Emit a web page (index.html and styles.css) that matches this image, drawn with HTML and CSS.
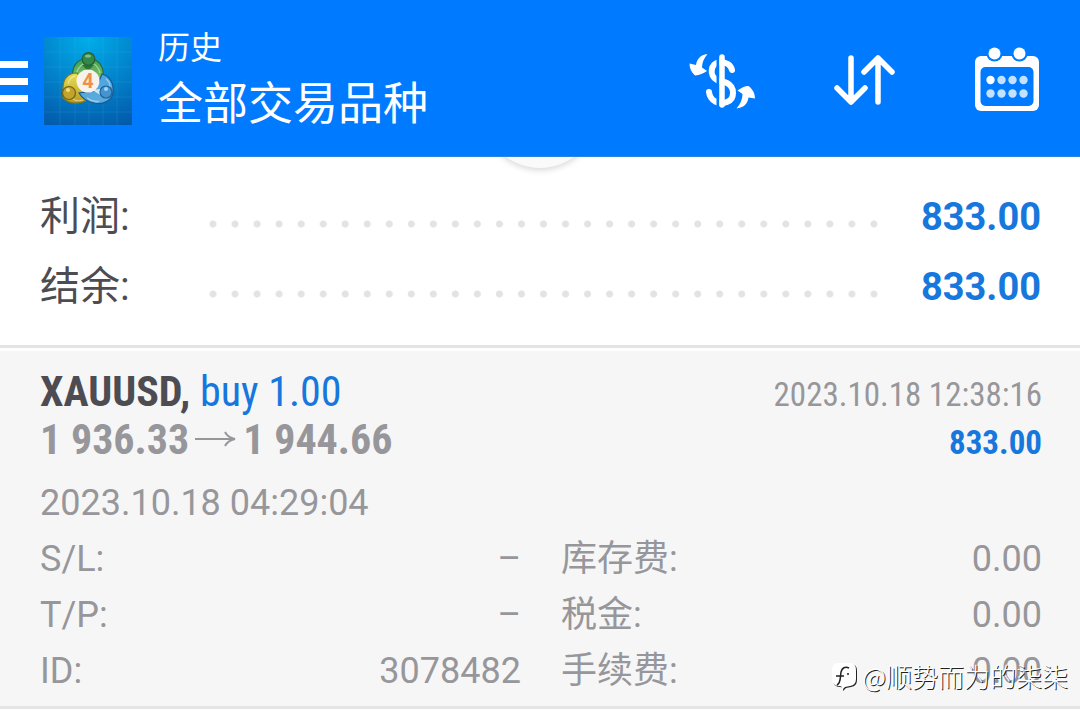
FILE: index.html
```html
<!DOCTYPE html>
<html lang="zh-CN">
<head>
    <meta charset="UTF-8">
    <meta name="viewport" content="width=device-width, initial-scale=1.0">
    <title>历史</title>
    <link rel="stylesheet" href="styles.css">
</head>
<body>
    <header class="topbar">
        <button class="menu-btn" type="button" aria-label="菜单"><span></span><span></span><span></span></button>
        <svg class="logo" viewBox="0 0 88 88" aria-hidden="true">
            <defs>
                <radialGradient id="bg" cx="0.5" cy="0" r="1.1">
                    <stop offset="0" stop-color="#00aeea"/>
                    <stop offset="0.5" stop-color="#0284cc"/>
                    <stop offset="1" stop-color="#0259aa"/>
                </radialGradient>
                <linearGradient id="green" x1="0" y1="0" x2="0" y2="1"><stop offset="0" stop-color="#3c9a50"/><stop offset="1" stop-color="#8fcf68"/></linearGradient>
                <linearGradient id="yellow" x1="0" y1="0" x2="0" y2="1"><stop offset="0" stop-color="#e8e058"/><stop offset="1" stop-color="#b89c20"/></linearGradient>
                <linearGradient id="blue" x1="0" y1="0" x2="0" y2="1"><stop offset="0" stop-color="#4ca4e0"/><stop offset="1" stop-color="#5cacdc"/></linearGradient>
            </defs>
            <rect width="88" height="88" fill="url(#bg)"/>
            <path d="M16 0v88M31 0v88M45 0v88M59 0v88M73 0v88M0 15h88M0 30h88M0 45h88M0 60h88M0 75h88" stroke="#5cc4ee" stroke-opacity="0.14"/>
            <g stroke-width="1.2">
                <path d="M29 43C27 29 33 22 44 21c11 1 17 9 15 22l-8 4-14-1z" fill="url(#green)" stroke="#246a3c"/>
                <path d="M33 36c-9 0-14 6-14 15v10c6 6 15 6 23 3l2-12z" fill="url(#yellow)" stroke="#80781c"/>
                <path d="M58 37c8 2 12 10 11 18 0 9-11 13-19 11-7-1-12-5-15-10l16-2z" fill="url(#blue)" stroke="#165a94"/>
                <path d="M33 35c1-4 3-6 6-8M56 36c-1-4-3-7-6-9M24 47c1-4 3-7 7-8M29 62c3 2 7 2 10 1M43 61c4 3 8 4 12 3M62 42c3 2 4 5 4 8" fill="none" stroke="#fff" stroke-opacity="0.45"/>
                <path d="M38 28h12l-6 6z" fill="#2c7438" stroke="none"/>
                <path d="M48 53l8-1 2 7z" fill="#c8e6f4" stroke="none"/>
                <circle cx="44.500" cy="22" r="6.300" fill="#348848" stroke="#246038"/>
                <circle cx="25" cy="56" r="6.500" fill="#c0a42c" stroke="#746018"/>
                <circle cx="62" cy="55" r="6" fill="#4494d0" stroke="#1c609c"/>
            </g>
            <ellipse cx="44" cy="19" rx="3" ry="1.600" fill="#80c088"/>
            <circle cx="24" cy="53" r="2" fill="#f0e080"/>
            <circle cx="62" cy="52" r="2" fill="#a0d4f8"/>
            <circle cx="44" cy="44" r="11.500" fill="#f6f3ee"/>
            <text class="logo-num" x="44" y="51" text-anchor="middle">4</text>
        </svg>
        <div class="titles">
            <p class="subtitle">历史</p>
            <h1 class="title">全部交易品种</h1>
        </div>
        <nav class="actions">
            <button class="icon-btn" type="button" aria-label="货币">
                <svg viewBox="0 0 70 70">
                    <path d="M46 24c-1-5-6-8-12-8-10 1-11 14-3 18 3 2 6 1 10 3 8 4 8 16 0 19-8 3-17-1-18-10" fill="none" stroke="#fff" stroke-width="6" stroke-linecap="round"/>
                    <path d="M32 8v54" stroke="#007aff" stroke-width="3"/>
                    <path d="M36 11v48" stroke="#fff" stroke-width="5.500" stroke-linecap="round"/>
                    <path d="M21.500 8C14 9 11 13 10 19l-6.500-1.500c0 5 2 9 5.500 12 5-.500 8-2 12-4.500l-5-3.500c0-5 2-9 5.500-13.500z" fill="#fff"/>
                    <path d="M50.500 62.500c7-1 11-4 12-11l6.500 1c0-5-2-9-6.500-12.500-4 0-7 2-11 4.500l5 3.500c0 5-2 10-6 14.500z" fill="#fff"/>
                </svg>
            </button>
            <button class="icon-btn" type="button" aria-label="排序">
                <svg viewBox="0 0 70 70">
                    <path d="M22 12v44M8 42l14 14 14-14M49 56V12M35 26l14-14 14 14" fill="none" stroke="#fff" stroke-width="5.500" stroke-linecap="round" stroke-linejoin="round"/>
                </svg>
            </button>
            <button class="icon-btn" type="button" aria-label="日历">
                <svg viewBox="0 0 70 70">
                    <rect x="3" y="10" width="64" height="55" rx="6" fill="#fff"/>
                    <circle cx="22.500" cy="7.500" r="8" fill="#007aff"/>
                    <circle cx="47.500" cy="7.500" r="8" fill="#007aff"/>
                    <circle cx="22.500" cy="7.500" r="6" fill="#fff"/>
                    <circle cx="47.500" cy="7.500" r="6" fill="#fff"/>
                    <rect x="8.500" y="21" width="53" height="39" rx="5" fill="#007aff"/>
                    <g fill="#c4e2ff">
                        <circle cx="18.500" cy="34" r="4.200" fill="#fff"/><circle cx="29.500" cy="34" r="4.200"/><circle cx="40.500" cy="34" r="4.200"/><circle cx="51.500" cy="34" r="4.200"/>
                        <circle cx="18.500" cy="47.500" r="4.200"/><circle cx="29.500" cy="47.500" r="4.200"/><circle cx="40.500" cy="47.500" r="4.200"/><circle cx="51.500" cy="47.500" r="4.200"/>
                    </g>
                </svg>
            </button>
        </nav>
    </header>

    <main>
        <section class="summary">
            <div class="pull"></div>
            <div class="sum-row"><span>利润:</span><i class="dots"></i><b>833.00</b></div>
            <div class="sum-row"><span>结余:</span><i class="dots"></i><b>833.00</b></div>
        </section>

        <section class="deal">
            <div class="deal-line">
                <span class="symbol"><b>XAUUSD,</b> <span class="side">buy 1.00</span></span>
                <time class="close-time">2023.10.18 12:38:16</time>
            </div>
            <div class="deal-line">
                <b class="price">1 936.33<svg class="arrow" viewBox="0 0 42 18" aria-label="到"><path d="M0 9h40M30 2c2 4 5 6 10 7-5 1-8 3-10 7" fill="none" stroke="#97979b" stroke-width="2"/></svg>1 944.66</b>
                <b class="profit">833.00</b>
            </div>
            <time class="open-time">2023.10.18 04:29:04</time>
            <div class="details">
                <div class="item"><span>S/L:</span><span>–</span></div>
                <div class="item"><span>库存费:</span><span>0.00</span></div>
                <div class="item"><span>T/P:</span><span>–</span></div>
                <div class="item"><span>税金:</span><span>0.00</span></div>
                <div class="item"><span>ID:</span><span>3078482</span></div>
                <div class="item"><span>手续费:</span><span>0.00</span></div>
            </div>
            <div class="watermark">
                <svg viewBox="0 0 28 30" aria-hidden="true">
                    <path d="M9 3h12q6 0 6 7v9q0 6-6 7l-5 1-3 3q1-4-3-4-7 0-7-7v-9q0-7 6-7z" fill="#222"/>
                    <path d="M8 2h12q6 0 6 7v9q0 6-6 7l-5 1-3 3q1-4-3-4-7 0-7-7V9q0-7 6-7z" fill="#fff"/>
                    <path d="M7 24c4-2 3-7 4-13 1-4 4-6 8-4M6 15h8M17 13h2" fill="none" stroke="#222" stroke-width="1.500"/>
                </svg>
                <span>@顺势而为的柒柒</span>
            </div>
        </section>
    </main>
</body>
</html>
```
FILE: styles.css
```css
* {
    box-sizing: border-box;
}

body {
    margin: 0;
    background: #fff;
    font-family: Roboto, "Noto Sans CJK SC", sans-serif;
    color: #97979b;
}

p,
h1 {
    margin: 0;
    font-weight: 400;
}

button {
    padding: 0;
    border: none;
    background: none;
    cursor: pointer;
}

.topbar {
    position: relative;
    z-index: 1;
    display: flex;
    align-items: center;
    height: 157px;
    padding: 6px 38px 0 0;
    background: #007aff;
    border-bottom: 1px solid #2a83dc;
    color: #fff;
}

.menu-btn {
    display: flex;
    flex-direction: column;
    gap: 10px;
    width: 28px;
    margin-right: 16px;
}

.menu-btn span {
    width: 28px;
    height: 7px;
    background: #fff;
}

.logo {
    width: 88px;
    height: 88px;
    margin-right: 26px;
}

.logo-num {
    font: bold 20px Roboto, sans-serif;
    fill: #f09048;
}

.titles {
    flex: 1;
}

.subtitle {
    font-size: 32px;
    line-height: 48px;
}

.title {
    font-size: 45px;
    line-height: 66px;
}

.actions {
    display: flex;
    gap: 73px;
}

.icon-btn,
.icon-btn svg {
    display: block;
    width: 70px;
    height: 70px;
}

.summary {
    position: relative;
    padding: 25px 39px 23px 40px;
    border-bottom: 3px solid #e4e4e4;
}

.pull {
    position: absolute;
    top: -105px;
    left: 50%;
    width: 116px;
    height: 116px;
    margin-left: -58px;
    border-radius: 50%;
    background: #fafafa;
    box-shadow: 0 2px 6px rgba(0, 0, 0, 0.16);
}

.sum-row {
    display: grid;
    grid-template-columns: 162px 1fr 156px;
    height: 70px;
    font-size: 38px;
    line-height: 70px;
    color: #4c4c52;
}

.sum-row span {
    font-size: 40px;
}

.sum-row b {
    text-align: right;
    color: #1677dd;
}

.dots {
    height: 8px;
    margin-top: 38px;
    background: radial-gradient(circle, #e3e3e4 3px, transparent 4px) 0 0 / 22px 8px round;
}

.deal {
    position: relative;
    margin-top: 3px;
    padding: 17px 38px 7px 40px;
    background: #f6f6f6;
    border-bottom: 3px solid #e4e4e4;
}

.deal-line {
    display: flex;
    justify-content: space-between;
    align-items: baseline;
    height: 48px;
    font-family: "Roboto Condensed", "Liberation Sans Narrow", Roboto, sans-serif;
    font-size: 42px;
    line-height: 48px;
}

.symbol b {
    color: #4c4c52;
}

.side,
.profit {
    color: #1677dd;
}

.close-time,
.profit {
    font-size: 33px;
    line-height: 40px;
}

.arrow {
    width: 42px;
    height: 18px;
    margin: 0 6px;
    vertical-align: 6px;
}

.open-time {
    display: block;
    margin-top: 11px;
    font-size: 36px;
    line-height: 56px;
}

.details {
    display: grid;
    grid-template-columns: 1fr 1fr;
    column-gap: 40px;
    font-size: 36px;
    line-height: 56px;
}

.item {
    display: flex;
    justify-content: space-between;
    height: 56px;
}

.watermark {
    position: absolute;
    right: 12px;
    bottom: 10px;
    display: flex;
    align-items: center;
    gap: 4px;
    font-family: "Noto Sans CJK SC", sans-serif;
    font-size: 26px;
    line-height: 40px;
    font-weight: 300;
    color: #fff;
    text-shadow: 1px 1px 0 #222;
}

.watermark svg {
    width: 28px;
    height: 30px;
}
```
